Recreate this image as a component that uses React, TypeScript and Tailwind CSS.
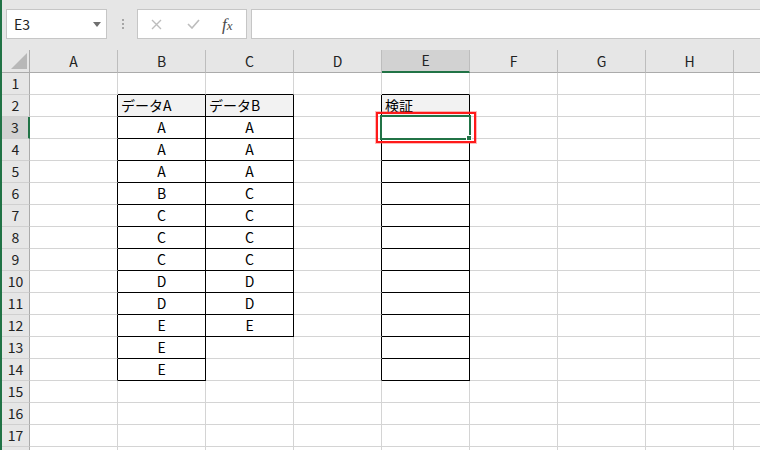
import React from "react";

const COLS = ["A", "B", "C", "D", "E", "F", "G", "H", "I"];
const ROWS = Array.from({ length: 18 }, (_, i) => i + 1);

const colB = ["データA", "A", "A", "A", "B", "C", "C", "C", "D", "D", "E", "E", "E"];
const colC = ["データB", "A", "A", "A", "C", "C", "C", "C", "D", "D", "E"];

const cells: Record<string, string> = {};
colB.forEach((v, i) => (cells[`B${i + 2}`] = v));
colC.forEach((v, i) => (cells[`C${i + 2}`] = v));
cells["E2"] = "検証";

const HEADS = ["B2", "C2", "E2"];

function clsx(...a: (string | false | undefined)[]) {
  return a.filter(Boolean).join(" ");
}

function boxed(col: string, row: number) {
  if (col === "B") return row >= 2 && row <= 14;
  if (col === "C") return row >= 2 && row <= 12;
  if (col === "E") return row >= 2 && row <= 14;
  return false;
}

function Cell({ col, row }: { col: string; row: number }) {
  const idx = COLS.indexOf(col);
  const next = COLS[idx + 1] ?? "";
  const right = boxed(col, row) || boxed(next, row);
  const bottom = boxed(col, row) || boxed(col, row + 1);
  const key = `${col}${row}`;
  const text = cells[key];
  const head = HEADS.includes(key);
  const active = key === "E3";

  return (
    <div
      className={clsx(
        "shrink-0 w-[88px] h-[22px] border-r border-b text-[14px] leading-[21px] text-black whitespace-nowrap",
        active && "relative z-10",
        right ? "border-r-black" : "border-r-[#d4d4d4]",
        bottom ? "border-b-black" : "border-b-[#d4d4d4]",
        head ? "bg-[#f2f2f2] pl-[3px] text-left" : "bg-white text-center"
      )}
    >
      {text}
      {active && (
        <>
          <div className="absolute -left-[6px] -top-[5px] -right-[7px] -bottom-[5px] border-2 border-[#ff1a1a] shadow-[0_0_0_1px_rgba(255,60,60,0.35)]" />
          <div className="absolute -left-[2px] -top-[2px] -right-[2px] -bottom-[2px] border-2 border-[#217346]" />
          <div className="absolute -right-[3px] -bottom-[3px] w-[6px] h-[6px] bg-[#217346] border border-white" />
        </>
      )}
    </div>
  );
}

export default function App() {
  return (
    <div
      className="flex w-[760px] h-[450px] overflow-hidden bg-[#e6e6e6]"
      style={{ fontFamily: '"Noto Sans CJK JP", "Noto Sans", sans-serif' }}
    >
      <div className="w-[2px] shrink-0 bg-[#217346]" />
      <div className="flex-1 flex flex-col min-w-0">
        {/* formula bar */}
        <div className="h-[50px] shrink-0 flex items-start pt-[9px]">
          <div className="ml-[4px] w-[101px] h-[30px] shrink-0 bg-white border border-[#c6c6c6] flex items-center justify-between pl-[7px] pr-[5px]">
            <span className="text-[14px] text-[#222]">E3</span>
            <svg width="8" height="5" viewBox="0 0 8 5">
              <path d="M0 0h8L4 5z" fill="#6f6f6f" />
            </svg>
          </div>
          <div className="ml-[15px] mt-[10px] flex flex-col gap-[2px]">
            <span className="w-[2px] h-[2px] bg-[#a6a6a6]" />
            <span className="w-[2px] h-[2px] bg-[#a6a6a6]" />
            <span className="w-[2px] h-[2px] bg-[#a6a6a6]" />
          </div>
          <div className="ml-[13px] w-[110px] h-[30px] shrink-0 bg-white border border-[#c6c6c6] flex items-center">
            <svg className="ml-[13px]" width="11" height="11" viewBox="0 0 11 11">
              <path d="M1 1l9 9M10 1l-9 9" stroke="#bdbdbd" strokeWidth="1.4" />
            </svg>
            <svg className="ml-[25px]" width="13" height="10" viewBox="0 0 13 10">
              <path d="M1 5l4 4 7-8" stroke="#bdbdbd" strokeWidth="1.6" fill="none" />
            </svg>
            <span
              className="ml-[22px] text-[17px] leading-none italic text-[#4a4a4a]"
              style={{ fontFamily: '"Liberation Serif", serif' }}
            >
              f<span className="text-[13px]">x</span>
            </span>
          </div>
          <div className="ml-[4px] flex-1 h-[30px] bg-white border border-[#c6c6c6] border-r-0" />
        </div>

        {/* column headers */}
        <div className="flex h-[23px] shrink-0">
          <div className="relative w-[28px] shrink-0 border-r border-b border-[#ababab] bg-[#e6e6e6]">
            <svg className="absolute right-[2px] bottom-[3px]" width="16" height="16" viewBox="0 0 16 16">
              <path d="M16 0V16H0z" fill="#b8b8b8" />
            </svg>
          </div>
          {COLS.map((c) => (
            <div
              key={c}
              className={clsx(
                "shrink-0 w-[88px] flex items-center justify-center text-[14px] text-[#222] border-r border-r-[#bdbdbd]",
                c === "E"
                  ? "bg-[#d2d2d2] border-b-2 border-b-[#217346]"
                  : "bg-[#e6e6e6] border-b border-b-[#ababab]"
              )}
            >
              {c === "I" ? "" : c}
            </div>
          ))}
        </div>

        {/* rows */}
        {ROWS.map((r) => (
          <div key={r} className="flex h-[22px] shrink-0">
            <div
              className={clsx(
                "w-[28px] shrink-0 flex items-center justify-center text-[14px] text-[#222] border-b border-b-[#d0d0d0]",
                r === 3
                  ? "bg-[#d2d2d2] border-r-2 border-r-[#217346]"
                  : "bg-[#e6e6e6] border-r border-r-[#ababab]"
              )}
            >
              {r < 18 ? r : ""}
            </div>
            {COLS.map((c) => (
              <Cell key={c} col={c} row={r} />
            ))}
          </div>
        ))}
      </div>
    </div>
  );
}
